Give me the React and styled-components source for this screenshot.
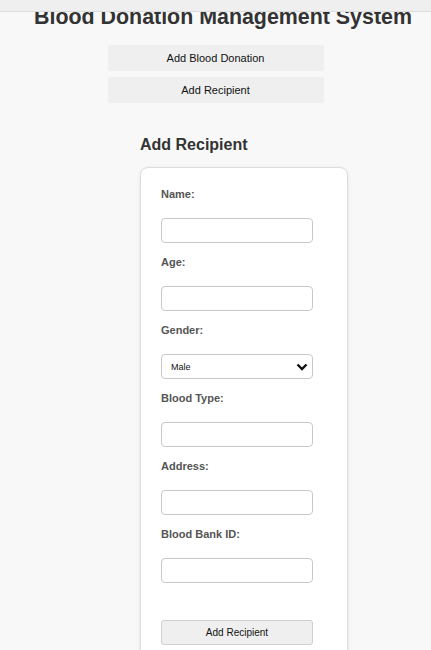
import styled, { createGlobalStyle } from 'styled-components';

const GlobalStyle = createGlobalStyle`
    html, body {
        margin: 0;
        padding: 0;
        background: #f8f8f8;
        font-family: "Liberation Sans", Arial, sans-serif;
    }
`;

const fields = [
    { id: 'name', label: 'Name:' },
    { id: 'age', label: 'Age:' },
    { id: 'gender', label: 'Gender:', select: ['Male', 'Female', 'Other'] },
    { id: 'bloodType', label: 'Blood Type:' },
    { id: 'address', label: 'Address:' },
    { id: 'bloodBankId', label: 'Blood Bank ID:' },
];

function Chevron() {
    return (
        <ChevronIcon width="12" height="8" viewBox="0 0 12 8">
            <path d="M1.5 1.5 L6 6 L10.5 1.5" fill="none" stroke="#111" strokeWidth="2.4" />
        </ChevronIcon>
    );
}

export default function App() {
    return (
        <>
            <GlobalStyle />
            <TopBar />
            <Page>
                <Title>Blood Donation Management System</Title>
                <Nav>
                    <NavButton>Add Blood Donation</NavButton>
                    <NavButton>Add Recipient</NavButton>
                </Nav>
                <Section>
                    <Heading>Add Recipient</Heading>
                    <Card>
                        {fields.map((field) => (
                            <Field key={field.id}>
                                <Label htmlFor={field.id}>{field.label}</Label>
                                {field.select ? (
                                    <SelectWrap>
                                        <Select id={field.id} defaultValue={field.select[0]}>
                                            {field.select.map((opt) => (
                                                <option key={opt}>{opt}</option>
                                            ))}
                                        </Select>
                                        <Chevron />
                                    </SelectWrap>
                                ) : (
                                    <Input id={field.id} type="text" />
                                )}
                            </Field>
                        ))}
                        <Submit>Add Recipient</Submit>
                    </Card>
                </Section>
            </Page>
        </>
    );
}

const TopBar = styled.div`
    position: fixed;
    top: 0;
    left: 0;
    right: 0;
    height: 11px;
    background: #efefef;
    border-bottom: 1px solid #dcdcdc;
    z-index: 2;
`;

const Page = styled.div`
    padding-top: 5px;
`;

const Title = styled.h1`
    margin: 0;
    padding-left: 15px;
    text-align: center;
    font-size: 21.4px;
    line-height: 25px;
    font-weight: bold;
    color: #333;
    white-space: nowrap;
`;

const Nav = styled.div`
    display: flex;
    flex-direction: column;
    align-items: center;
    gap: 6px;
    margin-top: 15px;
`;

const NavButton = styled.button`
    width: 216px;
    height: 26px;
    border: none;
    border-radius: 2px;
    background: #efefef;
    font-family: inherit;
    font-size: 11px;
    color: #111;
`;

const Section = styled.div`
    margin: 32px 0 0 140px;
`;

const Heading = styled.h2`
    margin: 0 0 13px;
    font-size: 16px;
    line-height: 19px;
    font-weight: bold;
    color: #333;
`;

const Card = styled.div`
    width: 166px;
    padding: 20px 20px 30px;
    background: #fff;
    border: 1px solid #ddd;
    border-radius: 8px;
    box-shadow: 0 1px 4px rgba(0, 0, 0, 0.08);
`;

const Field = styled.div`
    margin-bottom: 13px;
`;

const Label = styled.label`
    display: block;
    margin-bottom: 17px;
    font-size: 11px;
    line-height: 13px;
    font-weight: bold;
    color: #555;
`;

const Input = styled.input`
    display: block;
    box-sizing: border-box;
    width: 152px;
    height: 25px;
    margin: 0;
    padding: 0 6px;
    border: 1px solid #c8c8c8;
    border-radius: 4px;
    background: #fff;
`;

const SelectWrap = styled.div`
    position: relative;
    width: 152px;
`;

const Select = styled.select`
    display: block;
    box-sizing: border-box;
    width: 152px;
    height: 25px;
    margin: 0;
    padding: 0 9px;
    border: 1px solid #c8c8c8;
    border-radius: 4px;
    background: #fff;
    appearance: none;
    font-family: inherit;
    font-size: 9px;
    color: #111;
`;

const ChevronIcon = styled.svg`
    position: absolute;
    right: 5px;
    top: 9px;
    pointer-events: none;
`;

const Submit = styled.button`
    display: block;
    box-sizing: border-box;
    width: 152px;
    height: 25px;
    margin-top: 37px;
    border: 1px solid #cfcfcf;
    border-radius: 3px;
    background: #efefef;
    font-family: inherit;
    font-size: 10px;
    color: #111;
`;
